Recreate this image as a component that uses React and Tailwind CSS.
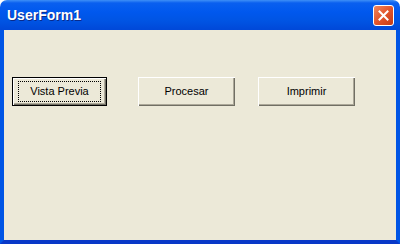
import React from 'react';

const ClassicButton = ({ label, isDefault, className }) => {
  return (
    <button
      type="button"
      className={`h-[29px] bg-[#ece9d8] text-[11px] text-black flex items-center justify-center ${
        isDefault
          ? 'border border-black shadow-[inset_1px_1px_0_#ffffff,inset_-1px_-1px_0_#716f64,inset_-2px_-2px_0_#aca899]'
          : 'shadow-[inset_1px_1px_0_#ffffff,inset_-1px_-1px_0_#716f64,inset_-2px_-2px_0_#aca899]'
      } ${className}`}
      style={{ fontFamily: '"Liberation Sans", Arial, sans-serif' }}
    >
      {isDefault ? (
        <span className="flex h-[21px] w-[83px] items-center justify-center border border-dotted border-black">
          {label}
        </span>
      ) : (
        label
      )}
    </button>
  );
};

const App = () => {
  return (
    <div className="w-[400px] h-[244px] bg-white">
      <div className="flex h-full flex-col overflow-hidden rounded-t-[7px]">
        {/* title bar */}
        <div className="flex h-[30px] shrink-0 items-center justify-between bg-[linear-gradient(180deg,#3e8ff7_0%,#0a5fef_10%,#0058ee_40%,#0054e3_70%,#0048d8_100%)] pl-[7px] pr-[6px]">
          <span
            className="text-[14px] font-bold text-white [text-shadow:1px_1px_0_#0a2a8a]"
            style={{ fontFamily: '"Liberation Sans", Arial, sans-serif' }}
          >
            UserForm1
          </span>
          <div className="flex h-[21px] w-[21px] items-center justify-center rounded-[3px] border border-white bg-[linear-gradient(135deg,#f0875e_0%,#e2552c_50%,#c43a14_100%)]">
            <svg width="11" height="11" viewBox="0 0 11 11">
              <path d="M1.5 1.5 L9.5 9.5 M9.5 1.5 L1.5 9.5" stroke="#ffffff" strokeWidth="2" strokeLinecap="square" />
            </svg>
          </div>
        </div>
        {/* body */}
        <div className="flex flex-1 flex-col border-x-[4px] border-b-[4px] border-x-[#0055e5] border-b-[#0838c8] bg-[#ece9d8]">
          <div className="flex items-start pl-[8px] pt-[47px]">
            <ClassicButton label="Vista Previa" isDefault className="w-[95px]" />
            <ClassicButton label="Procesar" className="ml-[31px] w-[97px]" />
            <ClassicButton label="Imprimir" className="ml-[23px] w-[97px]" />
          </div>
        </div>
      </div>
    </div>
  );
};

export default App;
